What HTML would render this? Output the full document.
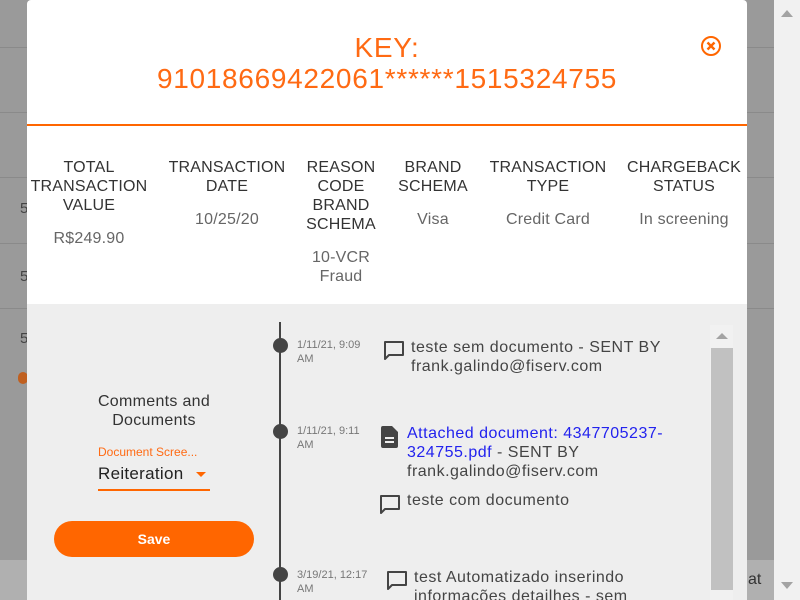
<!DOCTYPE html>
<html><head><meta charset="utf-8"><style>
*{margin:0;padding:0;box-sizing:border-box}
body{width:800px;height:600px;overflow:hidden;background:#9a9a9a;font-family:"Liberation Sans",sans-serif;position:relative}
.bgl{position:absolute;left:0;width:774px;height:1px;background:#8a8a8a}
.sb{position:absolute;right:0;top:0;width:26px;height:600px;background:#f1f1f1}
.modal{position:absolute;left:27px;top:0;width:720px;height:600px;background:#fff;border-radius:4px 4px 0 0;overflow:hidden}
.key{position:absolute;top:32px;left:0;width:720px;text-align:center;color:#ff6a13;font-size:28px;line-height:31px;letter-spacing:0.7px}
.close{position:absolute;left:673px;top:35px}
.hr{position:absolute;top:124px;left:0;width:720px;height:2px;background:#ff6600}
.col{position:absolute;top:158px;text-align:center;color:#333;font-size:16px;line-height:19px;letter-spacing:0.2px}
.col .v{color:#666;margin-top:14px}
.gray{position:absolute;top:304px;left:0;width:720px;height:296px;background:#eee}
.t{position:absolute;color:#444;font-size:16px;line-height:19px;letter-spacing:0.5px}
.d{position:absolute;color:#777;font-size:11px;line-height:14px}
.dot{position:absolute;left:246px;width:15px;height:15px;border-radius:50%;background:#444}
</style></head><body>
<div class="bgl" style="top:47px"></div><div class="bgl" style="top:112px"></div><div class="bgl" style="top:177px"></div><div class="bgl" style="top:243px"></div><div class="bgl" style="top:308px"></div>
<div style="position:absolute;left:0;top:560px;width:774px;height:40px;background:#b0b0b0"></div>
<div style="position:absolute;left:18px;top:372px;width:10px;height:12px;border-radius:6px;background:#c06020"></div>
<div style="position:absolute;left:20px;top:200px;color:#444;font-size:15px">5</div>
<div style="position:absolute;left:20px;top:268px;color:#444;font-size:15px">5</div>
<div style="position:absolute;left:20px;top:330px;color:#444;font-size:15px">5</div>
<div style="position:absolute;left:748px;top:571px;color:#333;font-size:16px">at</div>
<div class="sb"><div style="position:absolute;left:7px;top:10px;border:6px solid transparent;border-bottom:7px solid #a3a3a3;border-top:0"></div><div style="position:absolute;left:7px;top:582px;border:6px solid transparent;border-top:7px solid #a3a3a3;border-bottom:0"></div></div>
<div class="modal">
<div class="key">KEY:<br>91018669422061******1515324755</div>
<svg class="close" width="22" height="22" viewBox="0 0 22 22"><circle cx="11" cy="11" r="9" fill="none" stroke="#ff6600" stroke-width="2"/><path d="M7.5 7.5L14.5 14.5M14.5 7.5L7.5 14.5" stroke="#ff6600" stroke-width="2.4"/></svg>
<div class="hr"></div>
<div class="col" style="left:0;width:124px">TOTAL<br>TRANSACTION<br>VALUE<div class="v">R$249.90</div></div>
<div class="col" style="left:138px;width:124px">TRANSACTION<br>DATE<div class="v">10/25/20</div></div>
<div class="col" style="left:272px;width:84px">REASON<br>CODE<br>BRAND<br>SCHEMA<div class="v">10-VCR<br>Fraud</div></div>
<div class="col" style="left:366px;width:80px">BRAND<br>SCHEMA<div class="v">Visa</div></div>
<div class="col" style="left:458px;width:126px">TRANSACTION<br>TYPE<div class="v">Credit Card</div></div>
<div class="col" style="left:596px;width:122px">CHARGEBACK<br>STATUS<div class="v">In screening</div></div>
<div class="gray">
<div style="position:absolute;left:0;top:88px;width:254px;text-align:center;color:#333;font-size:16px;line-height:19px;letter-spacing:0.3px">Comments and<br>Documents</div>
<div style="position:absolute;left:71px;top:141px;color:#ff6a13;font-size:12px">Document Scree...</div>
<div style="position:absolute;left:71px;top:160px;color:#222;font-size:17px;letter-spacing:0.3px">Reiteration</div>
<div style="position:absolute;left:169px;top:168px;border:5px solid transparent;border-top:5px solid #ff6600;border-bottom:0"></div>
<div style="position:absolute;left:71px;top:185px;width:112px;height:2px;background:#ff6600"></div>
<div style="position:absolute;left:27px;top:217px;width:200px;height:36px;border-radius:18px;background:#ff6600;color:#fff;font-weight:bold;font-size:14px;text-align:center;line-height:36px">Save</div>
<div style="position:absolute;left:252px;top:18px;width:2px;height:278px;background:#444"></div>
<div class="dot" style="top:34px"></div><div class="dot" style="top:120px"></div><div class="dot" style="top:263px"></div>
<div class="d" style="left:270px;top:34px">1/11/21, 9:09<br>AM</div>
<div class="d" style="left:270px;top:120px">1/11/21, 9:11<br>AM</div>
<div class="d" style="left:270px;top:264px">3/19/21, 12:17<br>AM</div>
<svg style="position:absolute;left:356px;top:36px" width="22" height="22" viewBox="0 0 22 22"><path d="M2 2h18v13H6l-4 4z" fill="none" stroke="#444" stroke-width="2" stroke-linejoin="round"/></svg>
<svg style="position:absolute;left:354px;top:122px" width="18" height="22" viewBox="0 0 18 22"><path d="M2 0h9l6 6v14a2 2 0 0 1-2 2H2a2 2 0 0 1-2-2V2a2 2 0 0 1 2-2z" fill="#444"/><path d="M4 12h9M4 16h9" stroke="#eee" stroke-width="2"/></svg>
<svg style="position:absolute;left:352px;top:190px" width="22" height="22" viewBox="0 0 22 22"><path d="M2 2h18v13H6l-4 4z" fill="none" stroke="#444" stroke-width="2" stroke-linejoin="round"/></svg>
<svg style="position:absolute;left:359px;top:266px" width="22" height="22" viewBox="0 0 22 22"><path d="M2 2h18v13H6l-4 4z" fill="none" stroke="#444" stroke-width="2" stroke-linejoin="round"/></svg>
<div class="t" style="left:384px;top:34px">teste sem documento - SENT BY<br>frank.galindo@fiserv.com</div>
<div class="t" style="left:380px;top:120px"><span style="color:#2222ee">Attached document: 4347705237-<br>324755.pdf</span> - SENT BY<br>frank.galindo@fiserv.com</div>
<div class="t" style="left:380px;top:187px">teste com documento</div>
<div class="t" style="left:387px;top:264px">test Automatizado inserindo<br>informações detailhes - sem</div>
<div style="position:absolute;left:683px;top:21px;width:23px;height:275px;background:#f1f1f1"></div>
<div style="position:absolute;left:684px;top:44px;width:22px;height:242px;background:#c1c1c1"></div>
<div style="position:absolute;left:689px;top:29px;border:6px solid transparent;border-bottom:6px solid #a3a3a3;border-top:0"></div>
</div>
</div>
</body></html>
